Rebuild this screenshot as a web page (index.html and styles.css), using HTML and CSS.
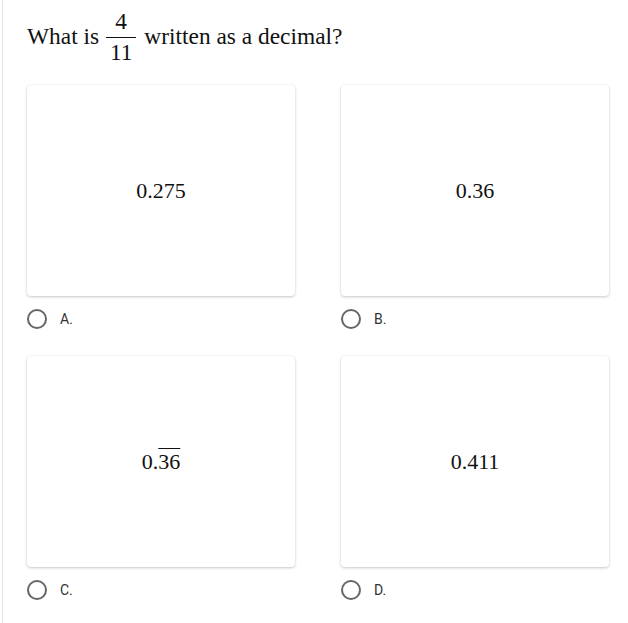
FILE: index.html
```html
<!DOCTYPE html>
<html>
<head>
<meta charset="utf-8">
<link rel="stylesheet" href="styles.css">
</head>
<body>
<div class="page">
  <div class="question">What is <span class="frac"><span class="num">4</span><span class="den">11</span></span> written as a decimal?</div>
  <div class="options">
    <div class="option">
      <div class="card"><span class="val">0.275</span></div>
      <div class="choice"><span class="radio"></span><span class="letter">A.</span></div>
    </div>
    <div class="option">
      <div class="card"><span class="val">0.36</span></div>
      <div class="choice"><span class="radio"></span><span class="letter">B.</span></div>
    </div>
    <div class="option">
      <div class="card"><span class="val">0.<span class="rep">36</span></span></div>
      <div class="choice"><span class="radio"></span><span class="letter">C.</span></div>
    </div>
    <div class="option">
      <div class="card"><span class="val">0.411</span></div>
      <div class="choice"><span class="radio"></span><span class="letter">D.</span></div>
    </div>
  </div>
</div>
</body>
</html>
```

FILE: styles.css
```css
html, body {
  margin: 0;
  padding: 0;
  background: #fff;
}
.page {
  margin-left: 2px;
  border-left: 1px solid #e2e2e2;
  min-height: 623px;
  padding-left: 24px;
  padding-top: 9px;
  box-sizing: border-box;
}
.question {
  font-family: "Liberation Serif", "Times New Roman", serif;
  font-size: 23.4px;
  line-height: 28px;
  color: #111;
  height: 59px;
}
.frac {
  display: inline-flex;
  flex-direction: column;
  align-items: stretch;
  vertical-align: 15px;
  margin: 0 2px 0 1px;
}
.frac .num {
  display: block;
  line-height: 24px;
  padding: 0 4px 4px;
  border-bottom: 1.5px solid #111;
  text-align: center;
}
.frac .den {
  display: block;
  line-height: 24px;
  padding: 2px 4px 0;
  text-align: center;
}
.options {
  margin-top: 17px;
  display: grid;
  grid-template-columns: 268px 268px;
  column-gap: 46px;
  row-gap: 27px;
}
.card {
  height: 211px;
  background: #fff;
  border-radius: 4px;
  box-shadow: 0 1px 3px rgba(0, 0, 0, 0.22), 0 0 1px rgba(0, 0, 0, 0.08);
  display: flex;
  align-items: center;
  justify-content: center;
}
.val {
  font-family: "Liberation Serif", "Times New Roman", serif;
  font-size: 22px;
  color: #111;
}
.rep {
  text-decoration: overline;
  text-decoration-thickness: 1px;
}
.choice {
  margin-top: 13px;
  height: 20px;
  display: flex;
  align-items: center;
}
.radio {
  width: 20px;
  height: 20px;
  border: 2px solid #666;
  border-radius: 50%;
  box-sizing: border-box;
}
.letter {
  margin-left: 13px;
  font-family: Roboto, "Liberation Sans", sans-serif;
  font-size: 14px;
  color: #333;
}
```
